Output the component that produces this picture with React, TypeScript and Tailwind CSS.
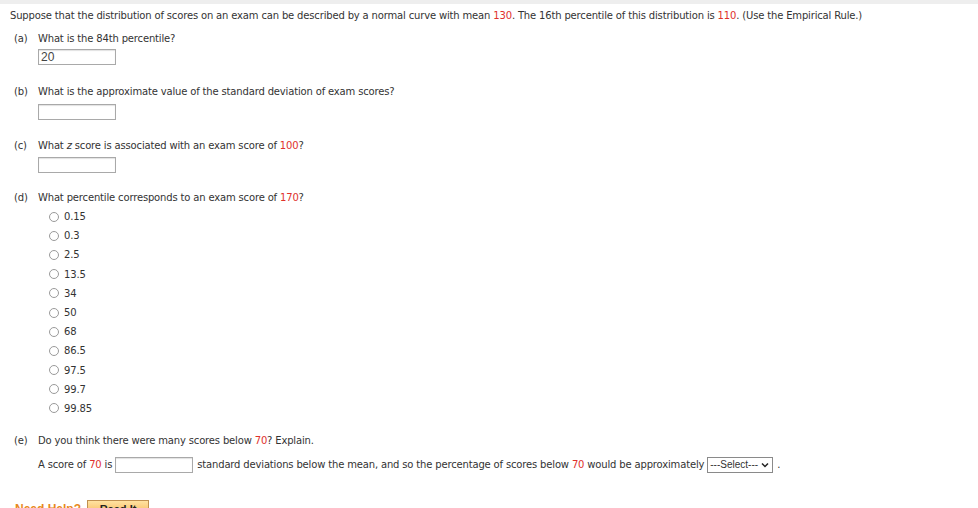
import * as React from 'react';

const Red = ({ children }: { children: React.ReactNode }) => (
  <span className="text-[#e0312b]">{children}</span>
);

const TextBox = ({ value = '', className = '' }: { value?: string; className?: string }) => (
  <div
    className={`h-[16px] w-[78px] border border-[#a9a9a9] bg-white px-[2px] text-[12px] leading-[14px] tracking-normal text-[#444] shadow-[inset_0_1px_1px_rgba(0,0,0,0.12)] ${className}`}
    style={{ fontFamily: '"Liberation Sans", Arial, sans-serif' }}
  >
    {value}
  </div>
);

const Part = ({ label, children }: { label: string; children: React.ReactNode }) => (
  <div className="flex leading-[14px]">
    <div className="w-[28px] pl-[4px]">{label}</div>
    <div>{children}</div>
  </div>
);

const choices = ['0.15', '0.3', '2.5', '13.5', '34', '50', '68', '86.5', '97.5', '99.7', '99.85'];

const App = () => {
  return (
    <main
      className="min-h-[508px] w-[978px] overflow-hidden bg-white text-[10px] tracking-[-0.16px] text-[#333]"
      style={{ fontFamily: '"DejaVu Sans", Verdana, sans-serif' }}
    >
      <div className="h-[4px] bg-[#eeeeee]"></div>

      <div className="px-[10px]">
        <p className="mt-[5px] leading-[14px]">
          Suppose that the distribution of scores on an exam can be described by a normal curve with mean <Red>130</Red>. The 16th percentile of this distribution is <Red>110</Red>. (Use the Empirical Rule.)
        </p>

        {/* (a) */}
        <div className="mt-[9px]">
          <Part label="(a)">What is the 84th percentile?</Part>
          <TextBox value="20" className="ml-[28px] mt-[3px]" />
        </div>

        {/* (b) */}
        <div className="mt-[20px]">
          <Part label="(b)">What is the approximate value of the standard deviation of exam scores?</Part>
          <TextBox className="ml-[28px] mt-[5px]" />
        </div>

        {/* (c) */}
        <div className="mt-[19px]">
          <Part label="(c)">
            What <i>z</i> score is associated with an exam score of <Red>100</Red>?
          </Part>
          <TextBox className="ml-[28px] mt-[4px]" />
        </div>

        {/* (d) */}
        <div className="mt-[18px]">
          <Part label="(d)">
            What percentile corresponds to an exam score of <Red>170</Red>?
          </Part>
          <ul className="ml-[39px] mt-[2px]">
            {choices.map((c) => (
              <li key={c} className="flex h-[19.2px] items-center">
                <span className="mr-[5px] h-[10px] w-[10px] rounded-full border border-[#9a9a9a] bg-white"></span>
                <span>{c}</span>
              </li>
            ))}
          </ul>
        </div>

        {/* (e) */}
        <div className="mt-[16px]">
          <Part label="(e)">
            Do you think there were many scores below <Red>70</Red>? Explain.
          </Part>
          <div className="ml-[28px] mt-[9px] flex h-[16px] items-center leading-[14px]">
            <span>
              A score of <Red>70</Red> is
            </span>
            <TextBox className="ml-[3px] mr-[4px]" />
            <span>
              standard deviations below the mean, and so the percentage of scores below <Red>70</Red> would be approximately
            </span>
            <div
              className="ml-[3px] flex h-[16px] w-[66px] items-center justify-between border border-[#8a8a8a] bg-white pl-[2px] pr-[3px] text-[10px] tracking-normal text-[#333]"
              style={{ fontFamily: '"Liberation Sans", Arial, sans-serif' }}
            >
              <span>---Select---</span>
              <svg width="8" height="6" viewBox="0 0 8 6">
                <path d="M1 1.5 L4 4.5 L7 1.5" fill="none" stroke="#222" strokeWidth="1.5" />
              </svg>
            </div>
            <span className="ml-[4px]">.</span>
          </div>
        </div>

        {/* help */}
        <div className="mt-[27px] flex items-center">
          <span
            className="pl-[5px] text-[12px] font-bold tracking-normal text-[#e8891e]"
            style={{ fontFamily: '"Liberation Sans", Arial, sans-serif' }}
          >
            Need Help?
          </span>
          <button
            className="ml-[6px] h-[18px] w-[62px] border border-[#c09050] bg-gradient-to-b from-[#ffe2a0] to-[#f5b04a] text-[11px] font-bold tracking-normal text-[#222]"
            style={{ fontFamily: '"Liberation Sans", Arial, sans-serif' }}
          >
            Read It
          </button>
        </div>
      </div>
    </main>
  );
};

export default App;
